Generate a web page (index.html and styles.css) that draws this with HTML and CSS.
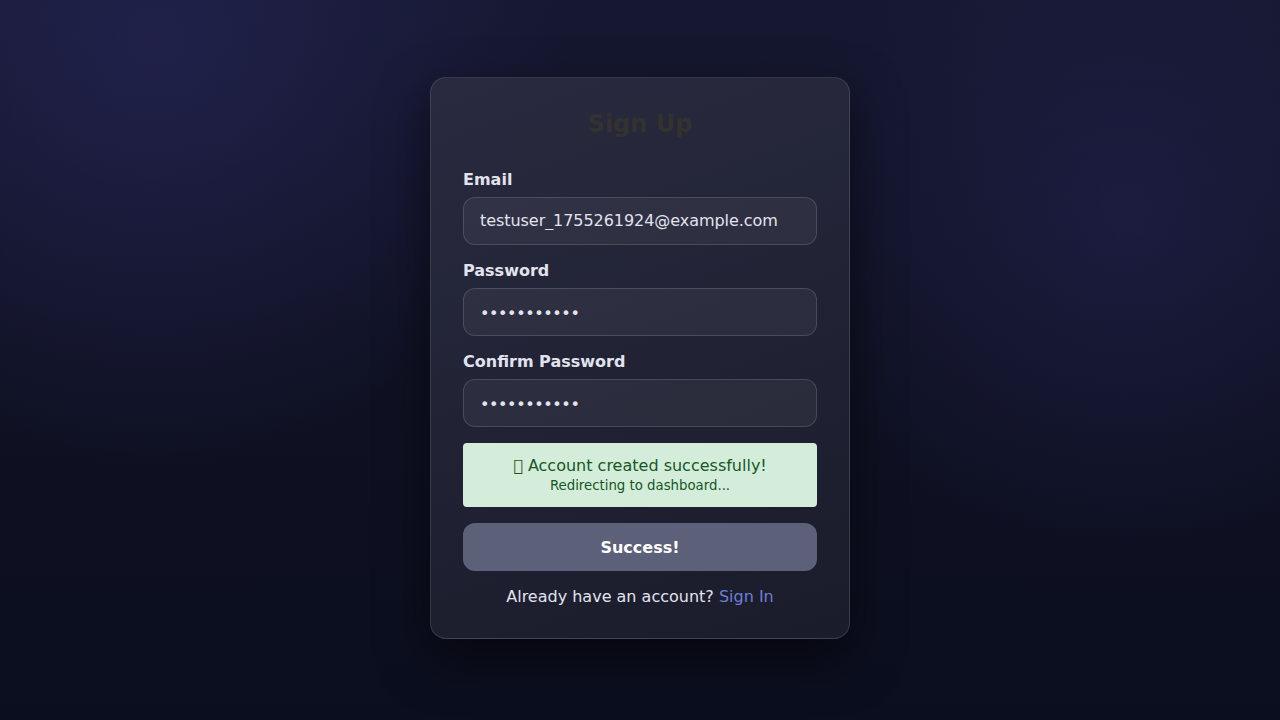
FILE: index.html
```html
<!DOCTYPE html>
<html lang="en">
<head>
<meta charset="utf-8">
<title>Sign Up</title>
<link rel="stylesheet" href="styles.css">
</head>
<body>
<main class="page">
  <form class="card">
    <h1 class="title">Sign Up</h1>
    <div class="field">
      <label class="label" for="email">Email</label>
      <input class="input" id="email" type="email" value="testuser_1755261924@example.com">
    </div>
    <div class="field">
      <label class="label" for="pw">Password</label>
      <input class="input input-pw" id="pw" type="password" value="Password123">
    </div>
    <div class="field">
      <label class="label" for="pw2">Confirm Password</label>
      <input class="input input-pw" id="pw2" type="password" value="Password123">
    </div>
    <div class="alert">
      <div class="alert-main">&#xE000; Account created successfully!</div>
      <div class="alert-sub">Redirecting to dashboard...</div>
    </div>
    <button class="btn" type="button">Success!</button>
    <p class="footer">Already have an account? <a class="link" href="#">Sign In</a></p>
  </form>
</main>
</body>
</html>
```
FILE: styles.css
```css
* { box-sizing: border-box; }
html, body { margin: 0; height: 100%; }
body {
  font-family: "DejaVu Sans", sans-serif;
  background:
    radial-gradient(circle at 12% 6%, rgba(36, 36, 82, 0.75) 0, rgba(36, 36, 82, 0) 32%),
    radial-gradient(circle at 88% 30%, rgba(34, 34, 78, 0.6) 0, rgba(34, 34, 78, 0) 28%),
    linear-gradient(180deg, #161831 0%, #101224 45%, #0b0e1e 100%);
  color: #e2e3ee;
}
.page {
  height: 100%;
  display: flex;
  align-items: center;
  justify-content: center;
}
.card {
  width: 420px;
  padding: 32px 32px 32px;
  border-radius: 16px;
  border: 1px solid rgba(255, 255, 255, 0.12);
  background: linear-gradient(160deg, #292a3f 0%, #212335 50%, #1a1c2b 100%);
  box-shadow: 0 20px 50px rgba(0, 0, 0, 0.55);
  margin-top: -5px;
}
.title {
  margin: 0 0 32px;
  text-align: center;
  font-size: 24px;
  line-height: 28px;
  font-weight: 700;
  color: #33322f;
}
.field { margin-bottom: 16px; }
.label {
  display: block;
  font-size: 16px;
  line-height: 19px;
  font-weight: 700;
  color: #e2e3ee;
  margin-bottom: 8px;
}
.input {
  display: block;
  width: 100%;
  height: 48px;
  padding: 0 16px;
  border-radius: 12px;
  border: 1px solid rgba(255, 255, 255, 0.14);
  background: rgba(255, 255, 255, 0.05);
  color: #e2e3ee;
  font-family: "DejaVu Sans", sans-serif;
  font-size: 16px;
  letter-spacing: -0.06px;
  outline: none;
}
.input-pw { letter-spacing: -0.4px; padding-top: 3px; }
.alert {
  background: #d4edda;
  color: #155724;
  border-radius: 4px;
  padding: 12px 16px 13px;
  text-align: center;
  margin-bottom: 16px;
}
.alert-main { font-size: 16px; line-height: 22px; }
.alert-sub { font-size: 13.3px; line-height: 17px; }
.btn {
  display: block;
  width: 100%;
  height: 48px;
  padding: 2px 0 0;
  border: 0;
  border-radius: 12px;
  background: #5c6079;
  color: #ffffff;
  font-family: "DejaVu Sans", sans-serif;
  font-size: 16px;
  font-weight: 700;
}
.footer {
  margin: 16px 0 0;
  text-align: center;
  font-size: 16px;
  line-height: 19px;
  color: #e2e3ee;
}
.link { color: #6b7fd8; text-decoration: none; }
```
